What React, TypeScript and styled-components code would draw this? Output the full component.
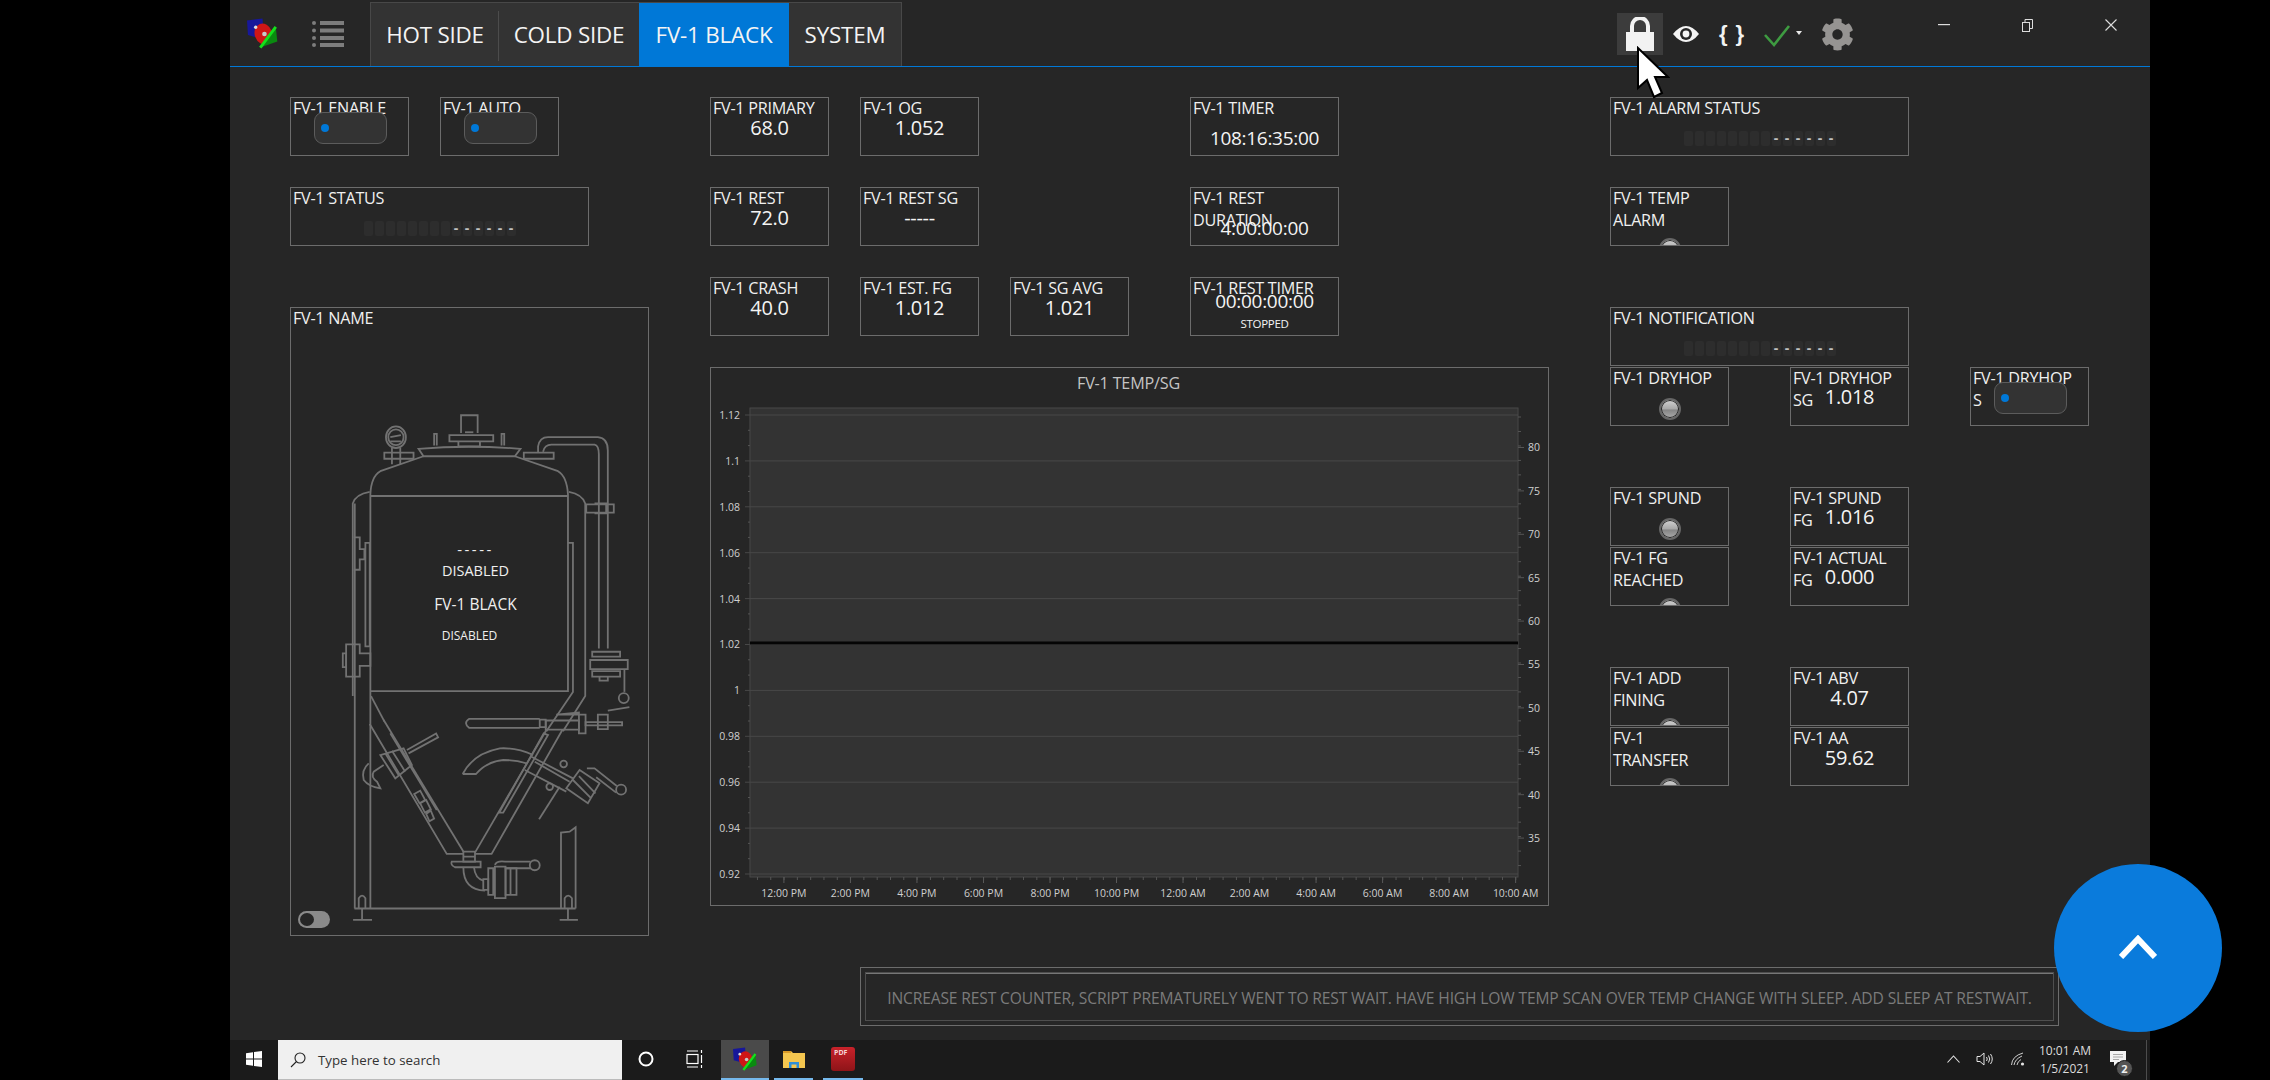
import React from 'react';
import styled, { createGlobalStyle } from 'styled-components';
import { FaCog } from 'react-icons/fa';

const FONT = `"Open Sans", "Noto Sans", "Liberation Sans", sans-serif`;

const Global = createGlobalStyle`
  html, body { margin: 0; padding: 0; background: #000; height: 1080px; overflow: hidden; }
  body { font-family: ${FONT}; }
  * { box-sizing: border-box; }
`;

const Win = styled.div`
  position: relative;
  width: 1920px;
  height: 1080px;
  margin-left: 230px;
  background: #262626;
  display: flex;
  flex-direction: column;
  color: #f0f0f0;
`;

const TitleBar = styled.header`
  height: 67px;
  flex: none;
  display: flex;
  align-items: flex-start;
  border-bottom: 1px solid #0078d7;
  padding-left: 17px;
`;
const LogoWrap = styled.div`
  width: 31px; height: 32px; margin-top: 18px; flex: none;
  svg { display: block; }
`;
const ListWrap = styled.div`
  width: 32px; height: 28px; margin: 20px 26px 0 34px; flex: none;
  svg { display: block; }
`;
const Tabs = styled.nav`
  display: flex;
  height: 64px;
  margin-top: 2px;
  background: #333;
  border: 1px solid #484848;
  border-bottom: none;
`;
const Tab = styled.div<{ $w: number; $on?: boolean; $div?: boolean }>`
  width: ${p => p.$w}px;
  display: flex;
  align-items: center;
  justify-content: center;
  font-size: 22.4px;
  letter-spacing: -0.2px;
  color: #f4f4f4;
  background: ${p => (p.$on ? '#0078d7' : 'transparent')};
  position: relative;
  &::after {
    content: '';
    display: ${p => (p.$div ? 'block' : 'none')};
    position: absolute;
    right: 0; top: 8px; bottom: 5px;
    width: 1px;
    background: #4c4c4c;
  }
`;
const Tools = styled.div`
  display: flex;
  align-items: center;
  height: 42px;
  margin: 13px 0 0 715px;
`;
const ToolTile = styled.div<{ $w: number; $on?: boolean }>`
  width: ${p => p.$w}px;
  height: 42px;
  display: flex;
  align-items: center;
  justify-content: center;
  background: ${p => (p.$on ? '#3c3c3c' : 'transparent')};
  svg { display: block; }
`;
const Braces = styled.span`
  font-size: 22px;
  font-weight: 700;
  color: #f2f2f2;
  letter-spacing: 1px;
  font-family: "Liberation Sans", sans-serif;
`;
const WinBtns = styled.div`
  display: flex;
  margin-left: 43px;
  height: 50px;
`;
const WinBtn = styled.div`
  width: 83.5px;
  height: 50px;
  display: flex;
  align-items: center;
  justify-content: center;
  svg { display: block; }
`;

const Canvas = styled.main`
  flex: 1;
  min-height: 0;
  padding: 30px 0 0 60px;
  display: grid;
  grid-template-columns: repeat(62, 30px);
  grid-auto-rows: 30px;
`;

const Box = styled.section<{ $c: number; $r: number; $w: number; $h: number }>`
  grid-column: ${p => p.$c + 1} / span ${p => p.$w};
  grid-row: ${p => p.$r + 1} / span ${p => p.$h};
  width: ${p => p.$w * 30 - 1}px;
  height: ${p => p.$h * 30 - 1}px;
  border: 1px solid #6c6c6c;
  display: grid;
  grid-template: 1fr / 1fr;
  overflow: hidden;
  & > * { grid-area: 1 / 1; }
`;
const Label = styled.div`
  font-size: 16.2px;
  line-height: 22px;
  margin-top: -1px;
  padding-left: 2px;
  color: #f0f0f0;
  letter-spacing: -0.28px;
  white-space: nowrap;
`;
const Value = styled.div<{ $y: number; $size?: number }>`
  margin-top: ${p => p.$y - 13}px;
  height: 24px;
  line-height: 24px;
  text-align: center;
  font-size: ${p => p.$size ?? 20}px;
  color: #f4f4f4;
  letter-spacing: -0.3px;
`;
const Toggle = styled.div`
  justify-self: start;
  align-self: start;
  width: 73px;
  height: 32px;
  margin: 14px 0 0 23px;
  background: #333;
  border: 1px solid #5c5c5c;
  border-radius: 9px;
  display: flex;
  align-items: center;
  padding-left: 6px;
  &::before {
    content: '';
    width: 8px;
    height: 8px;
    border-radius: 50%;
    background: #0078d7;
  }
`;
const Led = styled.div<{ $y: number }>`
  justify-self: center;
  align-self: start;
  width: 22px;
  height: 22px;
  margin-top: ${p => p.$y}px;
  border-radius: 50%;
  border: 2px solid #666;
  background: linear-gradient(#d2d2d2 0%, #a8a8a8 50%, #858585 55%, #aaa 100%);
  box-shadow: inset 0 0 0 1px #222;
`;
const Marquee = styled.div`
  display: flex;
  justify-content: center;
  gap: 2px;
  margin-top: 33px;
  height: 15px;
  align-self: start;
`;
const Seg = styled.span<{ $on?: boolean }>`
  width: 9px;
  height: 15px;
  background: #2d2d2d;
  border-radius: 2px;
  font-size: 14px;
  font-weight: 700;
  line-height: 14px;
  text-align: center;
  color: #c0c0c0;
`;

const TankSvg = styled.svg`
  width: 100%;
  height: 100%;
  display: block;
  path, circle, ellipse, rect { vector-effect: non-scaling-stroke; }
`;
const TankText = styled.div`
  display: flex;
  flex-direction: column;
  align-items: center;
  padding: 230px 0 0 12px;
  align-self: start;
`;
const TankLine = styled.div<{ $h: number; $size: number; $shift?: number; $gap?: number }>`
  height: ${p => p.$h}px;
  line-height: ${p => p.$h}px;
  font-size: ${p => p.$size}px;
  margin-left: ${p => p.$shift ?? 0}px;
  letter-spacing: ${p => p.$gap ?? 0}px;
  color: #efefef;
  white-space: nowrap;
`;
const MiniSwitch = styled.div`
  align-self: end;
  justify-self: start;
  width: 32px;
  height: 17px;
  margin: 0 0 7px 7px;
  border-radius: 9px;
  background: #8a8a8a;
  display: flex;
  align-items: center;
  padding-left: 2px;
  &::before {
    content: '';
    width: 14px;
    height: 13px;
    border-radius: 50%;
    background: #262626;
  }
`;

const ChartSvg = styled.svg`
  width: 100%;
  height: 100%;
  display: block;
  text { font-family: ${FONT}; }
`;

const Note = styled.section`
  grid-column: 20 / span 40;
  grid-row: 30 / span 2;
  width: 1199px;
  height: 59px;
  border: 1px solid #6c6c6c;
  padding: 4px;
  display: flex;
`;
const NoteInner = styled.div`
  flex: 1;
  border: 1px solid #4e4e4e;
  display: flex;
  align-items: center;
  justify-content: center;
  color: #7b7b7b;
  font-size: 15.6px;
  letter-spacing: -0.14px;
  white-space: nowrap;
  padding-top: 2px;
  box-shadow: inset 1px 8px 0 -7px #777;
`;

const Taskbar = styled.footer`
  height: 40px;
  flex: none;
  display: flex;
  align-items: stretch;
  background: #1b1b1b;
`;
const TaskTile = styled.div<{ $w?: number; $on?: boolean; $run?: boolean; $ml?: number }>`
  width: ${p => p.$w ?? 48}px;
  margin-left: ${p => p.$ml ?? 0}px;
  display: flex;
  align-items: center;
  justify-content: center;
  background: ${p => (p.$on ? '#4a4a4a' : 'transparent')};
  border-bottom: 2px solid ${p => (p.$run ? '#76b9ed' : 'transparent')};
  svg { display: block; }
`;
const Search = styled.div`
  width: 344px;
  background: #f0f0f0;
  display: flex;
  align-items: center;
  padding-left: 12px;
  gap: 12px;
  font-size: 13.3px;
  color: #333;
  border-bottom: 1px solid #bbb;
`;
const Tray = styled.div`
  margin-left: auto;
  display: flex;
  align-items: stretch;
`;
const Clock = styled.div`
  width: 60px;
  display: flex;
  flex-direction: column;
  align-items: center;
  justify-content: center;
  font-size: 12px;
  line-height: 18px;
  color: #dcdcdc;
  white-space: nowrap;
`;
const EdgeLine = styled.div`
  width: 1px;
  margin: 0 3px 0 5px;
  background: #4d4d4d;
`;
const PdfTile = styled.div`
  width: 24px;
  height: 24px;
  border-radius: 3px;
  background: linear-gradient(#c8222a, #8e1418);
  color: #f5d5d5;
  font-size: 7px;
  font-weight: 700;
  padding: 1px 0 0 3px;
  line-height: 9px;
`;
const Notify = styled.div`
  position: relative;
  width: 46px;
  display: flex;
  align-items: center;
  justify-content: center;
  svg { margin-top: -4px; }
`;
const Badge = styled.span`
  position: absolute;
  left: 21px;
  top: 20px;
  width: 17px;
  height: 17px;
  border-radius: 50%;
  background: #555;
  border: 1px solid #1b1b1b;
  color: #f0f0f0;
  font-size: 11px;
  font-weight: 700;
  line-height: 15px;
  text-align: center;
`;

const Fab = styled.button`
  position: absolute;
  left: 1824px;
  top: 864px;
  width: 168px;
  height: 168px;
  border: none;
  border-radius: 50%;
  background: #0a7bdc;
  padding: 0;
  display: flex;
  align-items: center;
  justify-content: center;
  svg { display: block; margin-top: -2px; }
`;
const Cursor = styled.div`
  position: absolute;
  left: 1406px;
  top: 46px;
  width: 34px;
  height: 54px;
  svg { display: block; }
`;

const Logo = ({ s = 1 }: { s?: number }) => (
  <svg width={31 * s} height={32 * s} viewBox="0 0 32 32">
    <polygon points="0,2 16,0 17,14 8,19 1,17" fill="#17179a" />
    <ellipse cx="17" cy="16" rx="9" ry="11" fill="#cf1616" transform="rotate(-20 17 16)" />
    <circle cx="9" cy="9" r="1.8" fill="#ddd" />
    <circle cx="18" cy="16" r="2.4" fill="#c8c8c8" />
    <polygon points="29.7,8.7 31.3,23.7 13.7,30" fill="#0a8a10" />
    <path d="M13.7 30 L29.7 8.7" stroke="#14e01c" strokeWidth="3" />
  </svg>
);

const Segs = () => (
  <Marquee>
    {Array.from({ length: 14 }, (_, i) => (
      <Seg key={i} $on={i >= 8}>{i >= 8 ? '-' : ''}</Seg>
    ))}
  </Marquee>
);

/* Upper part of the vessel, in units of the drawing */
const TANK = [
  'M415 358 Q565 348 722 358 L705 376 L430 376 Z',
  'M543 320 L543 277 L593 277 L593 320',
  'M508 325 L640 325 L640 340 L508 340 Z',
  'M535 340 L535 352 L600 352 L600 340',
  'M555 318 L580 318',
  'M462 350 L462 322 L470 322 L470 350',
  'M665 350 L665 322 L673 322 L673 350',
  'M335 355 L335 395 M360 355 L360 395',
  'M312 367 L400 367 L400 382 L312 382 Z',
  'M330 330 L362 325 M330 340 L362 340',
  'M732 367 L822 367 L822 382 L732 382 Z',
  'M775 367 L775 352 Q780 330 805 330 L955 330 Q985 332 985 362 L985 840',
  'M790 365 Q795 348 815 348 L945 348 Q958 350 958 372 L958 840',
  'M920 492 L1003 492 L1003 512 L920 512 Z',
  'M945 490 L980 490 L980 514 L945 514',
  'M430 376 L300 412 Q272 425 270 468 L270 1468',
  'M705 376 L835 412 Q862 425 865 468 L865 945',
  'M270 472 L865 472',
  'M270 943 L865 943',
  'M268 462 Q225 468 217 490 L217 955',
  'M223 490 L223 1468',
  'M868 462 Q908 468 917 490 L917 955 L850 1040',
  'M255 585 L268 585 L268 835 L255 835 Z',
  'M865 585 L880 585 L880 945 L800 1040',
  'M220 572 L238 572 L238 600 L252 600 L252 625 L238 625 L238 650 L220 650',
  'M197 830 L238 830 L238 852 L270 852 L270 882 L238 882 L238 908 L197 908 Z',
  'M187 852 L197 852 L197 885 L187 885 Z',
  'M272 955 L312 1016',
  'M780 1010 L568 1010 Q548 1020 568 1032 L780 1032',
  'M780 1012 L798 1012 L798 1030 L780 1030 Z',
  'M798 1014 L898 1014 L898 1036 L798 1036 Z',
  'M830 1000 L918 1000 L918 1045 L898 1045 L898 995 L830 1000',
  'M918 1018 L1028 1018 L1028 1026 L918 1026 Z',
  'M955 1000 L985 1000 L985 1035 L955 1035 Z',
  'M985 990 L1050 982',
  'M938 848 L1022 848 L1022 860 L938 860 Z',
  'M932 868 L1045 868 L1045 890 L932 890 Z',
  'M938 895 L1022 895 L1022 908 L938 908 Z',
  'M960 908 L960 918 L985 918 L985 908',
  'M1035 890 L1035 945',
];

/* Lower part of the vessel */
const TANK_LOW = [
  'M42 566 L708 566',
  'M55 565 L55 535 Q65 520 75 535 L75 565 M65 565 L65 600 M38 600 L95 600',
  'M675 565 L675 535 Q685 520 697 535 L697 565 M685 565 L685 600 M660 600 L715 600',
  'M664 566 L664 338 L690 335 L708 322 L708 566',
  'M88 12 L320 402 L370 402',
  'M130 0 L370 395',
  'M150 40 L290 270',
  'M222 222 L240 212 L255 240 L238 250 Z M240 250 L258 240 L272 268 L254 278 Z M258 282 L272 272 L282 296 L268 304 Z',
  'M405 398 L620 30',
  'M405 402 L455 402 L668 30',
  'M478 278 L490 278 L625 45 L612 40 Z',
  'M370 395 L405 395 L405 425 L370 425 Z M370 410 L405 410',
  'M335 425 L422 425 L422 442 L345 442 Q330 435 335 425 Z',
  'M370 442 Q370 510 435 512 M402 442 Q405 475 430 482',
  'M430 478 L445 478 L445 510 L430 510 Z',
  'M445 445 L460 445 L460 525 L445 525 Z',
  'M465 440 L497 440 L497 535 L465 535 Z',
  'M497 445 L530 445 L530 525 L497 525 Z M512 445 L512 525',
  'M465 435 Q470 422 495 425 L572 425 M495 445 L572 445',
  'M200 90 L288 40 L294 52 L205 100',
  'M120 105 L190 85 L215 135 L165 175 Z M135 100 L175 165 M155 92 L195 155',
  'M85 130 Q62 150 70 180 Q85 200 120 205 L110 185 Q90 170 100 155 L130 135',
  'M368 162 Q400 100 480 85 Q530 82 580 105',
  'M368 162 L408 162 Q440 125 490 120 Q530 120 560 130',
  'M575 110 L700 175',
  'M555 150 L680 215',
  'M585 125 L690 185',
  'M598 298 L660 200',
  'M680 205 L720 150 L780 190 L745 250 Z M700 180 L755 235 M718 168 L768 220',
  'M742 145 L765 145 L832 198 M770 172 L830 218',
];

const Tank = () => (
  <TankSvg viewBox="31 18 1075 1514" preserveAspectRatio="none" fill="none" stroke="#727272" strokeWidth={1.8}>
    {TANK.map((d, i) => <path key={i} d={d} />)}
    <ellipse cx="347" cy="330" rx="30" ry="26" />
    <ellipse cx="347" cy="330" rx="23" ry="19" />
    <ellipse cx="1033" cy="960" rx="15" ry="12" />
    <g transform="translate(180 1013) scale(1 0.804)">
      {TANK_LOW.map((d, i) => <path key={i} d={d} />)}
      <circle cx="585" cy="436" r="15" />
      <circle cx="845" cy="209" r="15" />
      <circle cx="672" cy="132" r="10" />
      <circle cx="630" cy="200" r="10" />
    </g>
  </TankSvg>
);

const LEFT = ['1.12', '1.1', '1.08', '1.06', '1.04', '1.02', '1', '0.98', '0.96', '0.94', '0.92'];
const RIGHT = ['80', '75', '70', '65', '60', '55', '50', '45', '40', '35'];
const BOTTOM = ['12:00 PM', '2:00 PM', '4:00 PM', '6:00 PM', '8:00 PM', '10:00 PM', '12:00 AM', '2:00 AM', '4:00 AM', '6:00 AM', '8:00 AM', '10:00 AM'];

const Chart = () => {
  const ticks: React.ReactNode[] = [];
  LEFT.forEach((_, i) => {
    const y = 415 + i * 45.9;
    ticks.push(<line key={`g${i}`} x1={745} x2={1519} y1={y} y2={y} stroke="#484848" />);
    if (i < 10) {
      [1, 2].forEach(k => ticks.push(
        <line key={`lm${i}${k}`} x1={748} x2={750} y1={y + k * 15.3} y2={y + k * 15.3} stroke="#555" />,
      ));
    }
  });
  for (let y = 417; y < 877; y += 14.47) {
    ticks.push(<line key={`rm${y}`} x1={1519} x2={1522} y1={y} y2={y} stroke="#555" />);
  }
  RIGHT.forEach((_, i) => {
    const y = 447.5 + i * 43.4;
    ticks.push(<line key={`r${i}`} x1={1519} x2={1525} y1={y} y2={y} stroke="#555" />);
  });
  BOTTOM.forEach((_, i) => {
    const x = 784 + i * 66.6;
    ticks.push(<line key={`b${i}`} x1={x} x2={x} y1={877} y2={883} stroke="#5a5a5a" />);
  });
  for (let x = 757.5; x < 1519; x += 13.32) {
    ticks.push(<line key={`bm${x}`} x1={x} x2={x} y1={877} y2={880} stroke="#555" />);
  }
  return (
    <ChartSvg viewBox="711 368 838 537" preserveAspectRatio="none">
      <text x={1129} y={389.5} textAnchor="middle" fontSize={16.2} letterSpacing={-0.2} fill="#c4c4c4">FV-1 TEMP/SG</text>
      <rect x={750} y={408} width={769} height={469} fill="#333" stroke="#484848" />
      {ticks}
      <rect x={750} y={641.5} width={769} height={3} fill="#050505" />
      {LEFT.map((t, i) => (
        <text key={t} x={740} y={415 + i * 45.9 + 4} textAnchor="end" fontSize={10.5} fill="#d0d0d0">{t}</text>
      ))}
      {RIGHT.map((t, i) => (
        <text key={t} x={1529} y={447.5 + i * 43.4 + 4} fontSize={10.5} fill="#d0d0d0">{t}</text>
      ))}
      {BOTTOM.map((t, i) => (
        <text key={t + i} x={784 + i * 66.6} y={897} textAnchor="middle" fontSize={10.5} fill="#d0d0d0">{t}</text>
      ))}
    </ChartSvg>
  );
};

export default function App() {
  return (
    <>
      <Global />
      <Win>
        <TitleBar>
          <LogoWrap><Logo /></LogoWrap>
          <ListWrap>
            <svg width="32" height="28" viewBox="0 0 32 28" fill="#7d7d7d">
              {[3, 10.5, 18, 25].map(y => (
                <g key={y}>
                  <circle cx="2" cy={y} r="2" />
                  <rect x="8" y={y - 2} width="24" height="4" />
                </g>
              ))}
            </svg>
          </ListWrap>
          <Tabs>
            <Tab $w={128} $div>HOT SIDE</Tab>
            <Tab $w={140}>COLD SIDE</Tab>
            <Tab $w={150} $on>FV-1 BLACK</Tab>
            <Tab $w={112}>SYSTEM</Tab>
          </Tabs>
          <Tools>
            <ToolTile $w={46} $on>
              <svg width="30" height="34" viewBox="0 0 30 34">
                <path d="M7 16 V9 a8 8 0 0 1 16 0 V16" fill="none" stroke="#f2f2f2" strokeWidth="4" />
                <rect x="1" y="15" width="28" height="19" fill="#f2f2f2" />
              </svg>
            </ToolTile>
            <ToolTile $w={46}>
              <svg width="26" height="20" viewBox="0 0 26 20">
                <path d="M0 10 Q13 -6 26 10 Q13 26 0 10 Z" fill="#f4f4f4" />
                <circle cx="13" cy="10" r="6" fill="#262626" />
                <circle cx="13" cy="10" r="3.4" fill="#f4f4f4" />
              </svg>
            </ToolTile>
            <ToolTile $w={46}><Braces>{'{ }'}</Braces></ToolTile>
            <ToolTile $w={60}>
              <svg width="44" height="28" viewBox="0 0 44 28" fill="none">
                <path d="M2 15 L11 25 L26 6" stroke="#3e9b41" strokeWidth="2.6" />
                <path d="M33 11 L39 11 L36 15 Z" fill="#e8e8e8" />
              </svg>
            </ToolTile>
            <ToolTile $w={44}><FaCog size={33} color="#969492" /></ToolTile>
          </Tools>
          <WinBtns>
            <WinBtn>
              <svg width="12" height="2" viewBox="0 0 12 2"><rect width="12" height="1.2" fill="#ddd" /></svg>
            </WinBtn>
            <WinBtn>
              <svg width="11" height="13" viewBox="0 0 11 13" fill="none" stroke="#ddd">
                <rect x="0.5" y="3.5" width="7" height="9" />
                <path d="M3 3 V0.5 H10.5 V9.5 H8" />
              </svg>
            </WinBtn>
            <WinBtn>
              <svg width="12" height="12" viewBox="0 0 12 12" stroke="#ddd" strokeWidth="1.1">
                <path d="M0.5 0.5 L11.5 11.5 M11.5 0.5 L0.5 11.5" />
              </svg>
            </WinBtn>
          </WinBtns>
        </TitleBar>

        <Canvas>
          <Box $c={0} $r={0} $w={4} $h={2}><Label>FV-1 ENABLE</Label><Toggle /></Box>
          <Box $c={5} $r={0} $w={4} $h={2}><Label>FV-1 AUTO</Label><Toggle /></Box>
          <Box $c={14} $r={0} $w={4} $h={2}><Label>FV-1 PRIMARY</Label><Value $y={31}>68.0</Value></Box>
          <Box $c={19} $r={0} $w={4} $h={2}><Label>FV-1 OG</Label><Value $y={31}>1.052</Value></Box>
          <Box $c={30} $r={0} $w={5} $h={2}><Label>FV-1 TIMER</Label><Value $y={41} $size={19}>108:16:35:00</Value></Box>
          <Box $c={44} $r={0} $w={10} $h={2}><Label>FV-1 ALARM STATUS</Label><Segs /></Box>

          <Box $c={0} $r={3} $w={10} $h={2}><Label>FV-1 STATUS</Label><Segs /></Box>
          <Box $c={14} $r={3} $w={4} $h={2}><Label>FV-1 REST</Label><Value $y={31}>72.0</Value></Box>
          <Box $c={19} $r={3} $w={4} $h={2}><Label>FV-1 REST SG</Label><Value $y={31}>-----</Value></Box>
          <Box $c={30} $r={3} $w={5} $h={2}><Label>FV-1 REST<br />DURATION</Label><Value $y={41} $size={19}>4:00:00:00</Value></Box>
          <Box $c={44} $r={3} $w={4} $h={2}><Label>FV-1 TEMP<br />ALARM</Label><Led $y={50} /></Box>

          <Box $c={14} $r={6} $w={4} $h={2}><Label>FV-1 CRASH</Label><Value $y={31}>40.0</Value></Box>
          <Box $c={19} $r={6} $w={4} $h={2}><Label>FV-1 EST. FG</Label><Value $y={31}>1.012</Value></Box>
          <Box $c={24} $r={6} $w={4} $h={2}><Label>FV-1 SG AVG</Label><Value $y={31}>1.021</Value></Box>
          <Box $c={30} $r={6} $w={5} $h={2}>
            <Label>FV-1 REST TIMER</Label>
            <Value $y={24} $size={19}>00:00:00:00</Value>
            <Value $y={47} $size={11.5}>STOPPED</Value>
          </Box>

          <Box $c={0} $r={7} $w={12} $h={21}>
            <Label>FV-1 NAME</Label>
            <Tank />
            <TankText>
              <TankLine $h={22} $size={15} $gap={2.5}>-----</TankLine>
              <TankLine $h={22} $size={14.5}>DISABLED</TankLine>
              <TankLine $h={44} $size={15.5}>FV-1 BLACK</TankLine>
              <TankLine $h={20} $size={12} $shift={-12}>DISABLED</TankLine>
            </TankText>
            <MiniSwitch />
          </Box>

          <Box $c={44} $r={7} $w={10} $h={2}><Label>FV-1 NOTIFICATION</Label><Segs /></Box>

          <Box $c={14} $r={9} $w={28} $h={18}><Chart /></Box>

          <Box $c={44} $r={9} $w={4} $h={2}><Label>FV-1 DRYHOP</Label><Led $y={30} /></Box>
          <Box $c={50} $r={9} $w={4} $h={2}><Label>FV-1 DRYHOP<br />SG</Label><Value $y={30}>1.018</Value></Box>
          <Box $c={56} $r={9} $w={4} $h={2}><Label>FV-1 DRYHOP<br />S</Label><Toggle /></Box>

          <Box $c={44} $r={13} $w={4} $h={2}><Label>FV-1 SPUND</Label><Led $y={30} /></Box>
          <Box $c={50} $r={13} $w={4} $h={2}><Label>FV-1 SPUND<br />FG</Label><Value $y={30}>1.016</Value></Box>
          <Box $c={44} $r={15} $w={4} $h={2}><Label>FV-1 FG<br />REACHED</Label><Led $y={50} /></Box>
          <Box $c={50} $r={15} $w={4} $h={2}><Label>FV-1 ACTUAL<br />FG</Label><Value $y={30}>0.000</Value></Box>

          <Box $c={44} $r={19} $w={4} $h={2}><Label>FV-1 ADD<br />FINING</Label><Led $y={50} /></Box>
          <Box $c={50} $r={19} $w={4} $h={2}><Label>FV-1 ABV</Label><Value $y={31}>4.07</Value></Box>
          <Box $c={44} $r={21} $w={4} $h={2}><Label>FV-1<br />TRANSFER</Label><Led $y={50} /></Box>
          <Box $c={50} $r={21} $w={4} $h={2}><Label>FV-1 AA</Label><Value $y={31}>59.62</Value></Box>

          <Note>
            <NoteInner>INCREASE REST COUNTER, SCRIPT PREMATURELY WENT TO REST WAIT. HAVE HIGH LOW TEMP SCAN OVER TEMP CHANGE WITH SLEEP. ADD SLEEP AT RESTWAIT.</NoteInner>
          </Note>
        </Canvas>

        <Taskbar>
          <TaskTile>
            <svg width="16" height="16" viewBox="0 0 16 16" fill="#fff">
              <path d="M0 2.3 L7 1.3 V7.5 H0 Z M8 1.1 L16 0 V7.5 H8 Z M0 8.5 H7 V14.7 L0 13.7 Z M8 8.5 H16 V16 L8 14.9 Z" />
            </svg>
          </TaskTile>
          <Search>
            <svg width="16" height="16" viewBox="0 0 16 16" fill="none" stroke="#222" strokeWidth="1.1">
              <circle cx="10" cy="6" r="5" />
              <path d="M6.5 9.5 L1 15" />
            </svg>
            Type here to search
          </Search>
          <TaskTile>
            <svg width="16" height="16" viewBox="0 0 16 16" fill="none" stroke="#fff" strokeWidth="2">
              <circle cx="8" cy="8" r="6.5" />
            </svg>
          </TaskTile>
          <TaskTile>
            <svg width="17" height="20" viewBox="0 0 17 20" fill="none" stroke="#fff" strokeWidth="1.2">
              <rect x="1" y="5.5" width="11" height="9" />
              <path d="M1 2 H12 M1 18 H12 M15.5 1 V4 M15.5 6 V14 M15.5 16 V19" />
            </svg>
          </TaskTile>
          <TaskTile $on $run $ml={3}><Logo s={0.78} /></TaskTile>
          <TaskTile $run $w={39} $ml={5}>
            <svg width="22" height="22" viewBox="0 0 22 22">
              <path d="M0 3 H8 L10 5 H22 V20 H0 Z" fill="#f4c64f" />
              <rect x="0" y="3" width="8" height="2" fill="#d99a28" />
              <path d="M6 20 V14 H16 V20 H13.5 V16.5 H8.5 V20 Z" fill="#2f8fd8" />
            </svg>
          </TaskTile>
          <TaskTile $run $w={40} $ml={10}><PdfTile>PDF</PdfTile></TaskTile>
          <Tray>
            <TaskTile $w={32}>
              <svg width="13" height="8" viewBox="0 0 13 8" fill="none" stroke="#e4e4e4" strokeWidth="1.1">
                <path d="M0.5 7.5 L6.5 1 L12.5 7.5" />
              </svg>
            </TaskTile>
            <TaskTile $w={32}>
              <svg width="18" height="14" viewBox="0 0 18 14" fill="none" stroke="#e4e4e4" strokeWidth="1">
                <path d="M1 4.5 H4 L8 1 V13 L4 9.5 H1 Z" />
                <path d="M10.5 5 Q12 7 10.5 9 M12.5 3.5 Q15 7 12.5 10.5 M14.5 2 Q18 7 14.5 12" />
              </svg>
            </TaskTile>
            <TaskTile $w={34}>
              <svg width="14" height="14" viewBox="0 0 14 14" fill="none" stroke="#cfcfcf" strokeWidth="1">
                <path d="M0.5 13 Q1 4 12 1 M3 13 Q4 7 11 4 M6 13 Q6.5 9.5 10 7.5" />
                <circle cx="11.5" cy="12" r="1.6" fill="#e4e4e4" stroke="none" />
              </svg>
            </TaskTile>
            <Clock>
              <span>10:01 AM</span>
              <span>1/5/2021</span>
            </Clock>
            <Notify>
              <svg width="16" height="15" viewBox="0 0 16 15">
                <path d="M0 0 H16 V11 H8 L4 15 V11 H0 Z" fill="#f2f2f2" />
                <path d="M3 3.5 H13 M3 6 H13 M3 8.5 H9" stroke="#888" strokeWidth="0.7" />
              </svg>
              <Badge>2</Badge>
            </Notify>
            <EdgeLine />
          </Tray>
        </Taskbar>

        <Fab aria-label="scroll up">
          <svg width="38" height="24" viewBox="0 0 38 24" fill="none" stroke="#fff" strokeWidth="6">
            <path d="M2 22 L19 4 L36 22" />
          </svg>
        </Fab>
        <Cursor>
          <svg width="34" height="54" viewBox="0 0 34 54">
            <path d="M2 2 L2 42 L11 34 L18 51 L26 47 L19 31 L32 31 Z" fill="#fff" stroke="#000" strokeWidth="2" />
          </svg>
        </Cursor>
      </Win>
    </>
  );
}
